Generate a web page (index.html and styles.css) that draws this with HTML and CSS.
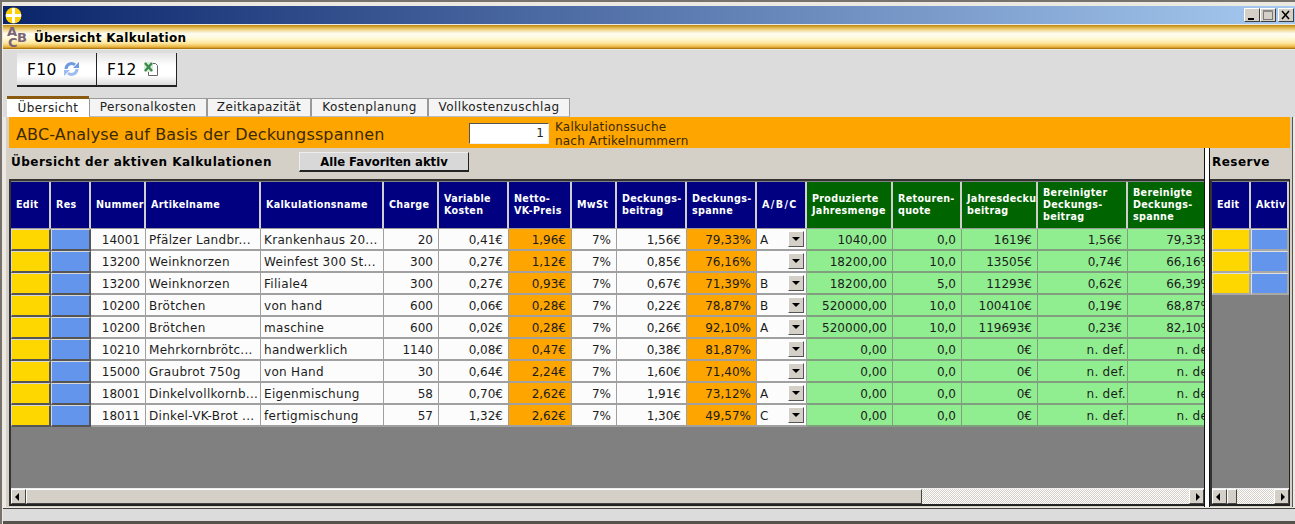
FILE: index.html
```html
<!DOCTYPE html>
<html lang="de">
<head>
<meta charset="utf-8">
<title>Übersicht Kalkulation</title>
<link rel="stylesheet" href="styles.css">
</head>
<body>
<div class="window">
  <div class="titlebar">
    <svg class="app-icon" width="17" height="17" viewBox="0 0 17 17"><circle cx="8.5" cy="8.5" r="8" fill="#ffd000"/><path d="M7 1h3v6h6v3h-6v6H7v-6H1V7h6z" fill="#fff"/></svg>
    <div class="winbtns">
      <span class="winbtn"><svg width="14" height="12" viewBox="0 0 14 12"><rect x="3" y="9" width="6" height="2" fill="#000"/></svg></span>
      <span class="winbtn"><svg width="14" height="12" viewBox="0 0 14 12"><rect x="2.5" y="1.5" width="9" height="9" fill="none" stroke="#777"/><rect x="2" y="1" width="10" height="2" fill="#888"/></svg></span>
      <span class="winbtn gap"><svg width="14" height="12" viewBox="0 0 14 12"><path d="M3 2l7 8M10 2l-7 8" stroke="#000" stroke-width="1.6"/></svg></span>
    </div>
  </div>
  <div class="goldbar">
    <div class="abc"><span class="a">A</span><span class="b">B</span><span class="c">C</span></div>
    <span class="goldtitle">Übersicht Kalkulation</span>
  </div>
  <div class="toolbar">
    <button class="fkey"><span class="fkey-label">F10</span>
      <svg width="15" height="16" viewBox="0 0 15 16"><path d="M2 8a5.500 5.500 0 0 1 9-4.200" fill="none" stroke="#6f9ae0" stroke-width="3"/><path d="M9 7h6V1z" fill="#6f9ae0"/><path d="M13 8a5.500 5.500 0 0 1-9 4.200" fill="none" stroke="#9dbdf0" stroke-width="3"/><path d="M6 9H0v6z" fill="#9dbdf0"/></svg>
    </button>
    <button class="fkey"><span class="fkey-label">F12</span>
      <svg width="15" height="16" viewBox="0 0 15 16"><path d="M4.500 2.500h7l2 2v10h-9z" fill="#fff" stroke="#666"/><rect x="0" y="1" width="9" height="10" fill="#dcecdc"/><path d="M1 2l7 8M8 2l-7 8" stroke="#3c8a4a" stroke-width="2.400"/></svg>
    </button>
  </div>
  <div class="tabs">
    <span class="tab active">Übersicht</span><span class="tab t2">Personalkosten</span><span class="tab t3">Zeitkapazität</span><span class="tab t4">Kostenplanung</span><span class="tab t5">Vollkostenzuschlag</span>
  </div>
  <div class="content">
    <div class="orange">
      <h1 class="orange-title">ABC-Analyse auf Basis der Deckungsspannen</h1>
      <div class="searchbox">1</div>
      <div class="searchlabel">Kalkulationssuche<br>nach Artikelnummern</div>
    </div>
    <div class="split">
      <div class="pane">
        <div class="pane-head">
          <span class="pane-title">Übersicht der aktiven Kalkulationen</span>
          <button class="favbtn">Alle Favoriten aktiv</button>
        </div>
        <div class="grid-panel">
          <div class="grid-area">
            <table class="grid main">
              <colgroup><col class="c1"><col class="c2"><col class="c3"><col class="c4"><col class="c5"><col class="c6"><col class="c7"><col class="c8"><col class="c9"><col class="c10"><col class="c11"><col class="c12"><col class="c13"><col class="c14"><col class="c15"><col class="c16"><col class="c17"></colgroup>
              <thead>
                <tr>
                  <th>Edit</th><th>Res</th><th>Nummer</th><th>Artikelname</th><th>Kalkulationsname</th><th>Charge</th><th>Variable<br>Kosten</th><th>Netto-<br>VK-Preis</th><th>MwSt</th><th>Deckungs-<br>beitrag</th><th>Deckungs-<br>spanne</th><th class="abc-head">A/B/C</th>
                  <th class="g">Produzierte<br>Jahresmenge</th><th class="g">Retouren-<br>quote</th><th class="g">Jahresdeckungs-<br>beitrag</th><th class="g">Bereinigter<br>Deckungs-<br>beitrag</th><th class="g">Bereinigte<br>Deckungs-<br>spanne</th>
                </tr>
              </thead>
              <tbody>
                <tr><td class="b"><i class="y"></i></td><td class="b"><i class="u"></i></td><td class="r">14001</td><td>Pfälzer Landbr...</td><td>Krankenhaus 20...</td><td class="r">20</td><td class="r">0,41€</td><td class="r o">1,96€</td><td class="r">7%</td><td class="r">1,56€</td><td class="r o">79,33%</td><td class="s">A<b class="dd"></b></td><td class="r l">1040,00</td><td class="r l">0,0</td><td class="r l">1619€</td><td class="r l">1,56€</td><td class="r l">79,33%</td></tr>
                <tr><td class="b"><i class="y"></i></td><td class="b"><i class="u"></i></td><td class="r">13200</td><td>Weinknorzen</td><td>Weinfest 300 St...</td><td class="r">300</td><td class="r">0,27€</td><td class="r o">1,12€</td><td class="r">7%</td><td class="r">0,85€</td><td class="r o">76,16%</td><td class="s"><b class="dd"></b></td><td class="r l">18200,00</td><td class="r l">10,0</td><td class="r l">13505€</td><td class="r l">0,74€</td><td class="r l">66,16%</td></tr>
                <tr><td class="b"><i class="y"></i></td><td class="b"><i class="u"></i></td><td class="r">13200</td><td>Weinknorzen</td><td>Filiale4</td><td class="r">300</td><td class="r">0,27€</td><td class="r o">0,93€</td><td class="r">7%</td><td class="r">0,67€</td><td class="r o">71,39%</td><td class="s">B<b class="dd"></b></td><td class="r l">18200,00</td><td class="r l">5,0</td><td class="r l">11293€</td><td class="r l">0,62€</td><td class="r l">66,39%</td></tr>
                <tr><td class="b"><i class="y"></i></td><td class="b"><i class="u"></i></td><td class="r">10200</td><td>Brötchen</td><td>von hand</td><td class="r">600</td><td class="r">0,06€</td><td class="r o">0,28€</td><td class="r">7%</td><td class="r">0,22€</td><td class="r o">78,87%</td><td class="s">B<b class="dd"></b></td><td class="r l">520000,00</td><td class="r l">10,0</td><td class="r l">100410€</td><td class="r l">0,19€</td><td class="r l">68,87%</td></tr>
                <tr><td class="b"><i class="y"></i></td><td class="b"><i class="u"></i></td><td class="r">10200</td><td>Brötchen</td><td>maschine</td><td class="r">600</td><td class="r">0,02€</td><td class="r o">0,28€</td><td class="r">7%</td><td class="r">0,26€</td><td class="r o">92,10%</td><td class="s">A<b class="dd"></b></td><td class="r l">520000,00</td><td class="r l">10,0</td><td class="r l">119693€</td><td class="r l">0,23€</td><td class="r l">82,10%</td></tr>
                <tr><td class="b"><i class="y"></i></td><td class="b"><i class="u"></i></td><td class="r">10210</td><td>Mehrkornbrötc...</td><td>handwerklich</td><td class="r">1140</td><td class="r">0,08€</td><td class="r o">0,47€</td><td class="r">7%</td><td class="r">0,38€</td><td class="r o">81,87%</td><td class="s"><b class="dd"></b></td><td class="r l">0,00</td><td class="r l">0,0</td><td class="r l">0€</td><td class="r l nd">n. def.</td><td class="r l nd">n. def.</td></tr>
                <tr><td class="b"><i class="y"></i></td><td class="b"><i class="u"></i></td><td class="r">15000</td><td>Graubrot 750g</td><td>von Hand</td><td class="r">30</td><td class="r">0,64€</td><td class="r o">2,24€</td><td class="r">7%</td><td class="r">1,60€</td><td class="r o">71,40%</td><td class="s"><b class="dd"></b></td><td class="r l">0,00</td><td class="r l">0,0</td><td class="r l">0€</td><td class="r l nd">n. def.</td><td class="r l nd">n. def.</td></tr>
                <tr><td class="b"><i class="y"></i></td><td class="b"><i class="u"></i></td><td class="r">18001</td><td>Dinkelvollkornb...</td><td>Eigenmischung</td><td class="r">58</td><td class="r">0,70€</td><td class="r o">2,62€</td><td class="r">7%</td><td class="r">1,91€</td><td class="r o">73,12%</td><td class="s">A<b class="dd"></b></td><td class="r l">0,00</td><td class="r l">0,0</td><td class="r l">0€</td><td class="r l nd">n. def.</td><td class="r l nd">n. def.</td></tr>
                <tr><td class="b"><i class="y"></i></td><td class="b"><i class="u"></i></td><td class="r">18011</td><td>Dinkel-VK-Brot ...</td><td>fertigmischung</td><td class="r">57</td><td class="r">1,32€</td><td class="r o">2,62€</td><td class="r">7%</td><td class="r">1,30€</td><td class="r o">49,57%</td><td class="s">C<b class="dd"></b></td><td class="r l">0,00</td><td class="r l">0,0</td><td class="r l">0€</td><td class="r l nd">n. def.</td><td class="r l nd">n. def.</td></tr>
              </tbody>
            </table>
          </div>
          <div class="hscroll">
            <span class="arrow left"></span><span class="thumb wide"></span><span class="track"></span><span class="arrow right"></span>
          </div>
        </div>
      </div>
      <div class="splitter"></div>
      <div class="pane">
        <div class="pane-head"><span class="pane-title reserve">Reserve</span></div>
        <div class="grid-panel">
          <div class="grid-area">
            <table class="grid side">
              <colgroup><col class="sc1"><col class="sc2"></colgroup>
              <thead><tr><th>Edit</th><th>Aktiv</th></tr></thead>
              <tbody>
                <tr><td class="b"><i class="y"></i></td><td class="b"><i class="u"></i></td></tr>
                <tr><td class="b"><i class="y"></i></td><td class="b"><i class="u"></i></td></tr>
                <tr><td class="b"><i class="y"></i></td><td class="b"><i class="u"></i></td></tr>
              </tbody>
            </table>
          </div>
          <div class="hscroll">
            <span class="arrow left"></span><span class="thumb small"></span><span class="track"></span><span class="arrow right"></span>
          </div>
        </div>
      </div>
    </div>
  </div>
  <div class="statusbar"></div>
</div>
</body>
</html>
```

FILE: styles.css
```css
* { box-sizing: border-box; }
html, body { margin: 0; padding: 0; }
body { width: 1295px; height: 524px; overflow: hidden; background: #808080; font-family: "DejaVu Sans", Verdana, sans-serif; font-size: 12px; color: #000; }
.window { height: 524px; border-top: 2px solid #77736c; border-left: 2px solid #77736c; background: #ece9e2; padding: 4px 0 0 1px; display: flex; flex-direction: column; overflow: hidden; }

.titlebar { height: 18px; flex: none; background: linear-gradient(90deg, #0a246a 0%, #a6caf0 100%); display: flex; align-items: center; justify-content: space-between; padding: 0 0 0 2px; }
.app-icon { display: block; }
.winbtns { display: flex; padding-right: 1px; }
.winbtn { width: 16px; height: 14px; background: #d4d0c8; border: 1px solid; border-color: #fff #404040 #404040 #fff; display: flex; align-items: center; justify-content: center; }
.winbtn.gap { margin-left: 2px; }

.goldbar { height: 24px; margin-top: 1px; flex: none; display: flex; align-items: center; background: linear-gradient(180deg, #b98409 0%, #d9a93a 8%, #f0d68c 20%, #fffdf4 36%, #fff9d8 56%, #fde79c 76%, #eab23b 92%, #9a6505 100%); }
.abc { position: relative; width: 31px; height: 24px; flex: none; color: #7a6478; font-weight: bold; }
.abc span { position: absolute; font-size: 13px; line-height: 10px; }
.abc .a { left: 4px; top: 2px; }
.abc .b { left: 14px; top: 8px; }
.abc .c { left: 5px; top: 13px; }
.goldtitle { font-weight: bold; font-size: 12px; letter-spacing: 0.3px; padding-top: 1px; }

.toolbar { height: 46px; flex: none; background: #dcdcdc; display: flex; align-items: flex-start; padding: 3px 0 0 14px; margin-top: 1px; }
.fkey { width: 80px; height: 34px; display: flex; align-items: center; gap: 7px; padding: 0 0 0 10px; font-family: inherit; font-size: 15.500px; letter-spacing: 0.4px; color: #000; background: linear-gradient(180deg, #e4e4e4 0%, #fff 40%, #fff 70%, #dcdcdc 100%); border: 0; border-right: 1px solid #222; border-bottom: 2px solid #222; }
.fkey-label { padding-top: 2px; }

.tabs { height: 21px; flex: none; background: #dcdcdc; display: flex; align-items: flex-end; padding-left: 4px; }
.tab { height: 19px; display: flex; align-items: center; justify-content: center; padding-bottom: 1px; font-size: 12px; color: #222; background: #f4f4f4; border: 1px solid #999; border-bottom-color: #bbb; letter-spacing: 0.4px; }
.tab.active { width: 82px; height: 21px; background: #fff; border: 0; border-top: 3px solid #8a5a10; }
.tab.t2 { width: 118px; }
.tab.t3 { width: 104px; }
.tab.t4 { width: 117px; }
.tab.t5 { width: 142px; }

.content { flex: 1; min-height: 0; background: #d4d0c8; margin-left: 3px; margin-right: 2px; padding: 0 0 0 3px; border-right: 1px solid #555; display: flex; flex-direction: column; }
.orange { height: 31px; flex: none; background: #ffa500; margin-right: 2px; display: flex; align-items: center; padding: 2px 0 0 7px; }
.orange-title { margin: 0; width: 453px; padding-top: 2px; font-size: 16px; letter-spacing: 0.14px; font-weight: normal; color: #3a2a00; white-space: nowrap; }
.searchbox { width: 80px; height: 21px; background: #fff; border: 1px solid; border-color: #555 #eee #eee #555; text-align: right; padding: 2px 4px 0 0; color: #222; }
.searchlabel { margin-left: 6px; font-size: 12px; line-height: 14px; letter-spacing: 0.2px; color: #3a2a00; }

.split { flex: 1; min-height: 0; display: grid; grid-template-columns: 1195px 6px 80px; }
.pane { display: flex; flex-direction: column; min-width: 0; }
.pane-head { height: 31px; flex: none; display: flex; align-items: center; padding: 0 0 3px 2px; }
.pane-title { font-weight: bold; font-size: 12px; width: 288px; letter-spacing: 0.48px; }
.favbtn { width: 170px; height: 20px; font-family: inherit; font-weight: bold; font-size: 11.600px; background: #d8d8d8; border: 1px solid; border-color: #eee #222 #222 #eee; border-bottom-width: 2px; padding: 0; color: #000; }
.splitter { background: #fff; border-left: 1px solid #111; border-right: 1px solid #111; }

.grid-panel { height: 327px; flex: none; background: #808080; border: 2px solid #222; border-color: #333 #222 #222 #333; border-right: 0; display: flex; flex-direction: column; overflow: hidden; }
.pane:last-child .grid-panel { border-right: 1px solid #222; }
.grid-area { flex: 1; min-height: 0; overflow: hidden; padding-top: 1px; }
.grid { table-layout: fixed; border-collapse: separate; border-spacing: 0; }
.main { width: 1207px; }
.side { width: 77px; }
.c1 { width: 40px; } .c2 { width: 40px; } .c3 { width: 55px; } .c4 { width: 115px; } .c5 { width: 123px; } .c6 { width: 55px; } .c7 { width: 70px; } .c8 { width: 63px; } .c9 { width: 45px; } .c10 { width: 70px; } .c11 { width: 70px; } .c12 { width: 50px; } .c13 { width: 86px; } .c14 { width: 69px; } .c15 { width: 76px; } .c16 { width: 90px; } .c17 { width: 90px; }
.sc1 { width: 39px; } .sc2 { width: 38px; }

.grid th { height: 47px; padding: 0 0 0 5px; background: #000080; color: #fff; font-size: 9.600px; line-height: 12px; font-weight: bold; text-align: left; white-space: nowrap; overflow: hidden; border-right: 2px solid #cfcfcf; border-bottom: 1px solid #999; letter-spacing: 0.3px; }
.grid th.g { background: #006400; }
.grid th.abc-head { letter-spacing: 1.4px; }
.grid td { height: 22px; padding: 1px 3px 0; background: #fcfcfc; color: #1c1c1c; font-size: 12px; letter-spacing: 0.3px; white-space: nowrap; overflow: hidden; border-right: 1px solid #a0a0a0; border-bottom: 2px solid #a0a0a0; }
.grid td.r { text-align: right; padding-right: 5px; letter-spacing: 0; }
.grid td.o { background: #ffa500; }
.grid td.l { background: #90ee90; border-color: #7f9f7f; }
.grid td.nd { padding-right: 1px; letter-spacing: 0.3px; }
.grid td.b { padding: 0; border: 0; background: #808080; }
.grid td.b i { display: block; width: 100%; height: 22px; border-style: solid; border-width: 1px 2px 2px 1px; border-color: #d8d8d8 #555 #555 #d8d8d8; }
.side td.b i { border-color: #e0e0e0 #a8a8a8 #a8a8a8 #e0e0e0; }
.y { background: #ffd700; }
.u { background: #6495ed; }
.grid td.s { position: relative; text-align: left; }
.dd { position: absolute; right: 2px; top: 2px; width: 16px; height: 16px; background: #d4d0c8; border: 1px solid; border-color: #fff #555 #555 #fff; }
.dd::after { content: ""; position: absolute; left: 3px; top: 5px; border: 4px solid transparent; border-top: 4px solid #000; border-bottom: 0; }

.hscroll { height: 16px; flex: none; display: flex; border-top: 1px solid #eee; background: #d4d0c8; }
.arrow { width: 15px; flex: none; background: #d4d0c8; border: 1px solid; border-color: #fff #444 #444 #fff; position: relative; }
.arrow::after { content: ""; position: absolute; top: 3px; border: 4px solid transparent; }
.arrow.left::after { left: 3px; border-right: 4px solid #000; border-left: 0; }
.arrow.right::after { right: 3px; border-left: 4px solid #000; border-right: 0; }
.thumb { flex: none; background: #d4d0c8; border: 1px solid; border-color: #fff #444 #444 #fff; }
.thumb.wide { width: 896px; }
.thumb.small { width: 10px; }
.track { flex: 1; background: conic-gradient(#fff 25%, #d4d0c8 0 50%, #fff 0 75%, #d4d0c8 0) 0 0 / 2px 2px; }

.statusbar { height: 16px; flex: none; margin-top: 1px; background: #dcdcdc; border-top: 1px solid #444; border-bottom: 3px solid #55524c; }
```
